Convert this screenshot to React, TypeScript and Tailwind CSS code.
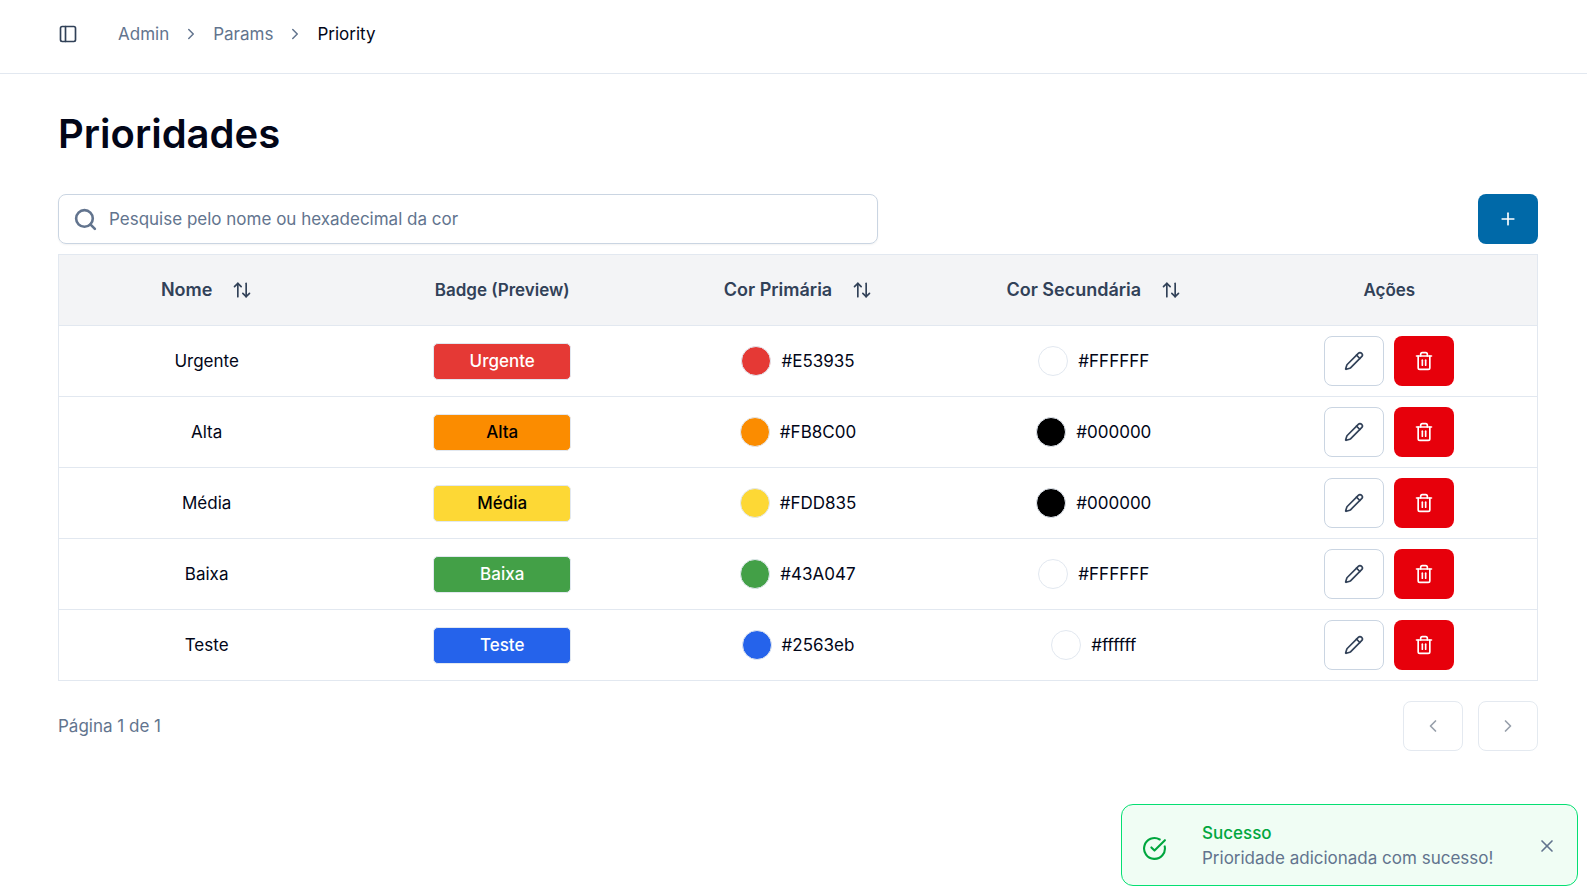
import React, { useState } from "react";
import {
  ArrowUpDown,
  ChevronLeft,
  ChevronRight,
  CircleCheckBig,
  PanelLeft,
  Pencil,
  Plus,
  Search,
  Trash2,
  X,
} from "lucide-react";

type Priority = { name: string; primary: string; secondary: string };

const priorities: Priority[] = [
  { name: "Urgente", primary: "#E53935", secondary: "#FFFFFF" },
  { name: "Alta", primary: "#FB8C00", secondary: "#000000" },
  { name: "Média", primary: "#FDD835", secondary: "#000000" },
  { name: "Baixa", primary: "#43A047", secondary: "#FFFFFF" },
  { name: "Teste", primary: "#2563eb", secondary: "#ffffff" },
];

function SortHeader({ label }: { label: string }) {
  return (
    <button type="button" className="inline-flex h-12 items-center gap-5 text-lg font-semibold">
      {label}
      <ArrowUpDown className="size-5" />
    </button>
  );
}

function Swatch({ color }: { color: string }) {
  return (
    <div className="flex items-center justify-center gap-[10px]">
      <span className="size-[30px] rounded-full border border-slate-200" style={{ backgroundColor: color }} />
      <span>{color}</span>
    </div>
  );
}

function Breadcrumb() {
  return (
    <nav aria-label="breadcrumb">
      <ol className="flex items-center gap-[13px] text-slate-500">
        <li><a href="#admin">Admin</a></li>
        <li aria-hidden="true"><ChevronRight className="size-[18px]" /></li>
        <li><a href="#params">Params</a></li>
        <li aria-hidden="true"><ChevronRight className="size-[18px]" /></li>
        <li className="text-slate-950" aria-current="page">Priority</li>
      </ol>
    </nav>
  );
}

function Toast({ onClose }: { onClose: () => void }) {
  return (
    <div
      role="status"
      className="fixed right-[9px] bottom-[6px] flex w-[457px] items-center rounded-xl border border-[#05df72] bg-green-50 px-5 pt-4 pb-[14px] leading-[25px]"
    >
      <CircleCheckBig className="mt-1 size-[25px] shrink-0 text-green-600" />
      <div className="ml-[35px] flex-1">
        <p className="font-medium text-green-600">Sucesso</p>
        <p className="text-slate-500">Prioridade adicionada com sucesso!</p>
      </div>
      <button type="button" aria-label="Fechar" onClick={onClose} className="text-slate-500">
        <X className="size-5" />
      </button>
    </div>
  );
}

export default function App() {
  const [toastOpen, setToastOpen] = useState(true);
  const [query, setQuery] = useState("");

  const rows = priorities.filter((p) =>
    [p.name, p.primary, p.secondary].some((v) => v.toLowerCase().includes(query.toLowerCase())),
  );

  return (
    <div className="min-h-screen bg-white font-['Inter',sans-serif] text-[17px] leading-[26px] text-slate-950">
      <header className="flex items-start gap-10 border-b border-slate-200 pt-[21px] pb-[26px] pl-[58px]">
        <button type="button" aria-label="Alternar menu" className="flex h-[26px] items-center text-slate-700">
          <PanelLeft className="size-5" />
        </button>
        <Breadcrumb />
      </header>

      <main className="pt-[35px] pr-[49px] pl-[58px]">
        <h1 className="text-[40px] leading-[50px] font-semibold">Prioridades</h1>

        <div className="mt-[35px] flex items-center justify-between">
          <label className="flex h-[50px] w-[820px] items-center gap-[11px] rounded-lg border border-slate-300 px-[14px] shadow-xs">
            <Search className="size-[25px] shrink-0 text-slate-500" strokeWidth={2.5} />
            <input
              type="text"
              aria-label="Pesquisar prioridades"
              placeholder="Pesquise pelo nome ou hexadecimal da cor"
              value={query}
              onChange={(e) => setQuery(e.target.value)}
              className="w-full bg-transparent outline-none placeholder:text-slate-500"
            />
          </label>
          <button
            type="button"
            aria-label="Adicionar prioridade"
            className="flex h-[50px] w-[60px] items-center justify-center rounded-lg bg-[#0069a8] text-white"
          >
            <Plus className="size-5" />
          </button>
        </div>

        <table className="mt-[10px] w-full table-fixed border-collapse border border-slate-200 text-center">
          <thead className="bg-gray-100 text-slate-700">
            <tr className="h-[71px]">
              <th><SortHeader label="Nome" /></th>
              <th className="font-semibold">Badge (Preview)</th>
              <th><SortHeader label="Cor Primária" /></th>
              <th><SortHeader label="Cor Secundária" /></th>
              <th className="font-semibold">Ações</th>
            </tr>
          </thead>
          <tbody>
            {rows.map((p) => (
              <tr key={p.name} className="h-[71px] border-t border-slate-200">
                <td>{p.name}</td>
                <td>
                  <span
                    className="mx-auto flex h-[37px] w-[138px] items-center justify-center rounded-[5px] border border-slate-200 font-medium"
                    style={{ backgroundColor: p.primary, color: p.secondary }}
                  >
                    {p.name}
                  </span>
                </td>
                <td><Swatch color={p.primary} /></td>
                <td><Swatch color={p.secondary} /></td>
                <td>
                  <div className="flex items-center justify-center gap-[10px]">
                    <button
                      type="button"
                      aria-label={`Editar ${p.name}`}
                      className="flex h-[50px] w-[60px] items-center justify-center rounded-lg border border-slate-300 text-slate-700"
                    >
                      <Pencil className="size-5" />
                    </button>
                    <button
                      type="button"
                      aria-label={`Excluir ${p.name}`}
                      className="flex h-[50px] w-[60px] items-center justify-center rounded-lg bg-[#e7000b] text-white"
                    >
                      <Trash2 className="size-5" />
                    </button>
                  </div>
                </td>
              </tr>
            ))}
          </tbody>
        </table>

        <div className="mt-5 flex items-center justify-between">
          <p className="text-slate-500">Página 1 de 1</p>
          <div className="flex gap-[15px]">
            <button
              type="button"
              disabled
              aria-label="Página anterior"
              className="flex h-[50px] w-[60px] items-center justify-center rounded-lg border border-slate-300 text-slate-700 opacity-50"
            >
              <ChevronLeft className="size-5" />
            </button>
            <button
              type="button"
              disabled
              aria-label="Próxima página"
              className="flex h-[50px] w-[60px] items-center justify-center rounded-lg border border-slate-300 text-slate-700 opacity-50"
            >
              <ChevronRight className="size-5" />
            </button>
          </div>
        </div>
      </main>

      {toastOpen && <Toast onClose={() => setToastOpen(false)} />}
    </div>
  );
}
